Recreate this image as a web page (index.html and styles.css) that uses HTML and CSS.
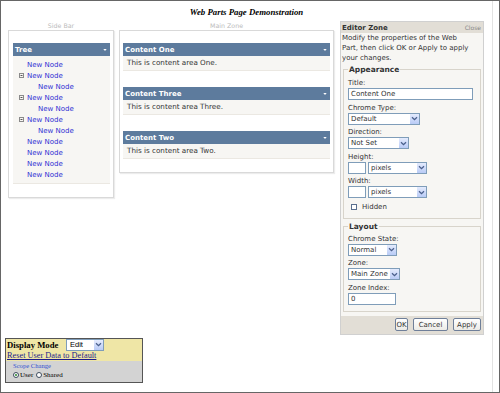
FILE: index.html
```html
<!DOCTYPE html>
<html lang="en">
  <head>
    <meta charset="UTF-8" />
    <meta name="viewport" content="width=device-width, initial-scale=1.0" />
    <title>Web Parts Page Demonstration</title>
    <link rel="stylesheet" href="styles.css">
  </head>
  <body>
    <div class="frame">
      <div class="page">
        <h1 class="title">Web Parts Page Demonstration</h1>

        <div class="zones">
          <div class="zone zone-side">
            <div class="zone-label">Side Bar</div>
            <div class="zone-box side-box">
              <div class="part-head">
                <span>Tree</span>
                <svg class="menu-arrow" width="5" height="3" viewBox="0 0 5 3"><path d="M0 0h5L2.5 3z" fill="#fff"/></svg>
              </div>
              <ul class="tree">
                <li class="node"><span class="tog"></span><a href="#">New Node</a></li>
                <li class="node"><span class="tog"><svg width="5" height="5" viewBox="0 0 5 5"><rect x=".5" y=".5" width="4" height="4" fill="none" stroke="#8a8a8a"/><path d="M1.5 2.5h2" stroke="#555"/></svg></span><a href="#">New Node</a></li>
                <li class="node sub"><span class="tog"></span><a href="#">New Node</a></li>
                <li class="node"><span class="tog"><svg width="5" height="5" viewBox="0 0 5 5"><rect x=".5" y=".5" width="4" height="4" fill="none" stroke="#8a8a8a"/><path d="M1.5 2.5h2" stroke="#555"/></svg></span><a href="#">New Node</a></li>
                <li class="node sub"><span class="tog"></span><a href="#">New Node</a></li>
                <li class="node"><span class="tog"><svg width="5" height="5" viewBox="0 0 5 5"><rect x=".5" y=".5" width="4" height="4" fill="none" stroke="#8a8a8a"/><path d="M1.5 2.5h2" stroke="#555"/></svg></span><a href="#">New Node</a></li>
                <li class="node sub"><span class="tog"></span><a href="#">New Node</a></li>
                <li class="node"><span class="tog"></span><a href="#">New Node</a></li>
                <li class="node"><span class="tog"></span><a href="#">New Node</a></li>
                <li class="node"><span class="tog"></span><a href="#">New Node</a></li>
                <li class="node"><span class="tog"></span><a href="#">New Node</a></li>
              </ul>
            </div>
          </div>

          <div class="zone zone-main">
            <div class="zone-label">Main Zone</div>
            <div class="zone-box main-box">
              <div class="part">
                <div class="part-head">
                  <span>Content One</span>
                  <svg class="menu-arrow" width="5" height="3" viewBox="0 0 5 3"><path d="M0 0h5L2.5 3z" fill="#fff"/></svg>
                </div>
                <div class="part-body">This is content area One.</div>
              </div>
              <div class="part">
                <div class="part-head">
                  <span>Content Three</span>
                  <svg class="menu-arrow" width="5" height="3" viewBox="0 0 5 3"><path d="M0 0h5L2.5 3z" fill="#fff"/></svg>
                </div>
                <div class="part-body">This is content area Three.</div>
              </div>
              <div class="part">
                <div class="part-head">
                  <span>Content Two</span>
                  <svg class="menu-arrow" width="5" height="3" viewBox="0 0 5 3"><path d="M0 0h5L2.5 3z" fill="#fff"/></svg>
                </div>
                <div class="part-body">This is content area Two.</div>
              </div>
            </div>
          </div>

          <div class="editor">
            <div class="editor-head">
              <span>Editor Zone</span>
              <span class="close">Close</span>
            </div>
            <div class="editor-body">
              <p class="intro">Modify the properties of the Web<br>Part, then click OK or Apply to apply<br>your changes.</p>

              <fieldset class="group">
                <legend>Appearance</legend>
                <div class="field">
                  <label>Title:</label>
                  <span class="input w-title">Content One</span>
                </div>
                <div class="field">
                  <label>Chrome Type:</label>
                  <span class="select w-chrome"><span class="val">Default</span><span class="arrow"><svg width="7" height="5" viewBox="0 0 7 5"><path d="M1 1.2l2.5 2.4L6 1.2" fill="none" stroke="#4a5f8c" stroke-width="1.3"/></svg></span></span>
                </div>
                <div class="field">
                  <label>Direction:</label>
                  <span class="select w-dir"><span class="val">Not Set</span><span class="arrow"><svg width="7" height="5" viewBox="0 0 7 5"><path d="M1 1.2l2.5 2.4L6 1.2" fill="none" stroke="#4a5f8c" stroke-width="1.3"/></svg></span></span>
                </div>
                <div class="field">
                  <label>Height:</label>
                  <div class="pair">
                    <span class="input w-small"></span>
                    <span class="select w-unit"><span class="val">pixels</span><span class="arrow"><svg width="7" height="5" viewBox="0 0 7 5"><path d="M1 1.2l2.5 2.4L6 1.2" fill="none" stroke="#4a5f8c" stroke-width="1.3"/></svg></span></span>
                  </div>
                </div>
                <div class="field">
                  <label>Width:</label>
                  <div class="pair">
                    <span class="input w-small"></span>
                    <span class="select w-unit"><span class="val">pixels</span><span class="arrow"><svg width="7" height="5" viewBox="0 0 7 5"><path d="M1 1.2l2.5 2.4L6 1.2" fill="none" stroke="#4a5f8c" stroke-width="1.3"/></svg></span></span>
                  </div>
                </div>
                <div class="field check-row">
                  <span class="checkbox"></span>
                  <span>Hidden</span>
                </div>
              </fieldset>

              <fieldset class="group">
                <legend>Layout</legend>
                <div class="field">
                  <label>Chrome State:</label>
                  <span class="select w-state"><span class="val">Normal</span><span class="arrow"><svg width="7" height="5" viewBox="0 0 7 5"><path d="M1 1.2l2.5 2.4L6 1.2" fill="none" stroke="#4a5f8c" stroke-width="1.3"/></svg></span></span>
                </div>
                <div class="field">
                  <label>Zone:</label>
                  <span class="select w-zone"><span class="val">Main Zone</span><span class="arrow"><svg width="7" height="5" viewBox="0 0 7 5"><path d="M1 1.2l2.5 2.4L6 1.2" fill="none" stroke="#4a5f8c" stroke-width="1.3"/></svg></span></span>
                </div>
                <div class="field">
                  <label>Zone Index:</label>
                  <span class="input w-index">0</span>
                </div>
              </fieldset>
            </div>
            <div class="editor-foot">
              <button class="btn btn-ok">OK</button>
              <button class="btn btn-cancel">Cancel</button>
              <button class="btn btn-apply">Apply</button>
            </div>
          </div>
        </div>

        <div class="display-mode">
          <div class="dm-top">
            <div class="dm-row">
              <span class="dm-label">Display Mode</span>
              <span class="select dm-select"><span class="val">Edit</span><span class="arrow"><svg width="7" height="5" viewBox="0 0 7 5"><path d="M1 1.2l2.5 2.4L6 1.2" fill="none" stroke="#4a5f8c" stroke-width="1.3"/></svg></span></span>
            </div>
            <a class="reset" href="#">Reset User Data to Default</a>
          </div>
          <div class="dm-scope">
            <div class="scope-title">Scope Change</div>
            <div class="radios">
              <span class="radio checked"></span><span>User</span>
              <span class="radio"></span><span>Shared</span>
            </div>
          </div>
        </div>
      </div>
      <div class="edge"></div>
    </div>
  </body>
</html>
```

FILE: styles.css
```css
html,
body {
  margin: 0;
  padding: 0;
  background: #fff;
}
.frame {
  width: 500px;
  height: 393px;
  box-sizing: border-box;
  border: 1px solid #666;
  display: flex;
  overflow: hidden;
}
.page {
  flex: 1;
  padding-top: 5px;
}
.edge {
  width: 7px;
  box-sizing: border-box;
  border-left: 1px solid #e2e2e2;
}
.title {
  margin: 0;
  text-align: center;
  font-family: "Liberation Serif", serif;
  font-style: italic;
  font-weight: bold;
  font-size: 8.8px;
  line-height: 12px;
  color: #000;
}

/* zones row */
.zones {
  display: flex;
  align-items: flex-start;
  margin: 3px 0 0 7px;
  font-family: "DejaVu Sans", Verdana, sans-serif;
}
.zone-label {
  text-align: center;
  font-size: 6.3px;
  line-height: 9px;
  color: #bbb;
}
.zone-side {
  width: 106px;
}
.zone-main {
  width: 215px;
  margin-left: 5px;
}
.zone-box {
  box-sizing: border-box;
  border: 1px solid #d9d9d9;
  box-shadow: 1px 1px 1px #ececec;
}
.side-box {
  padding: 12px 3px 13px 4px;
}
.main-box {
  padding: 12px 3px 13px 3px;
}
.part + .part {
  margin-top: 16px;
}
.part-head {
  display: flex;
  justify-content: space-between;
  align-items: center;
  height: 13px;
  padding: 0 3px 0 2px;
  background-color: #5d7b9d;
  color: #fff;
  font-weight: bold;
  font-size: 7px;
}
.menu-arrow {
  width: 4px;
  height: 2px;
}
.part-body {
  height: 15px;
  box-sizing: border-box;
  padding-left: 4px;
  line-height: 14px;
  font-size: 7.2px;
  color: #333;
  background-color: #f7f6f3;
  border-bottom: 1px solid #ebe8e2;
}

/* tree */
.tree {
  list-style: none;
  margin: 0;
  padding: 3px 0;
  background-color: #f7f6f3;
  border-bottom: 1px solid #ebe8e2;
}
.node {
  display: flex;
  align-items: center;
  height: 11px;
  padding-left: 6px;
  font-size: 7px;
}
.node.sub {
  padding-left: 17px;
}
.tog {
  width: 8px;
  display: flex;
  align-items: center;
}
.node a {
  color: #3030d4;
  text-decoration: none;
}

/* editor zone */
.editor {
  width: 144px;
  margin-left: 6px;
  box-sizing: border-box;
  border: 1px solid #d0d0d0;
  background-color: #f7f6f3;
  color: #333;
}
.editor-head {
  display: flex;
  justify-content: space-between;
  align-items: center;
  height: 11px;
  padding: 0 2px 0 1px;
  background-color: #e2ded6;
  font-weight: bold;
  font-size: 7px;
}
.editor-head .close {
  font-weight: normal;
  font-size: 6px;
  color: #888;
}
.editor-body {
  padding: 0 2px 0 1px;
}
.intro {
  margin: 0;
  font-size: 7px;
  line-height: 10px;
  white-space: nowrap;
}
.group {
  margin: 2px 0 0 1px;
  padding: 5px 3px 6px 4px;
  border: 1px solid #d8d4cb;
  min-width: 0;
}
.group + .group {
  margin-top: 3px;
  padding-top: 4px;
}
.group legend {
  padding: 0 1px;
  font-weight: bold;
  font-size: 7.5px;
  line-height: 9px;
}
.field {
  margin-bottom: 3.5px;
}
.field:last-child {
  margin-bottom: 0;
}
.field label {
  display: block;
  font-size: 7px;
  line-height: 9px;
}
.pair {
  display: flex;
  gap: 2px;
}
.input {
  display: block;
  box-sizing: border-box;
  height: 12px;
  padding-left: 2px;
  border: 1px solid #7f9db9;
  background: #fff;
  font-size: 7px;
  line-height: 10px;
}
.select {
  display: flex;
  box-sizing: border-box;
  height: 12px;
  border: 1px solid #7f9db9;
  background: #fff;
  font-size: 7px;
  line-height: 10px;
}
.select .val {
  flex: 1;
  padding-left: 2px;
  white-space: nowrap;
  overflow: hidden;
}
.select .arrow {
  width: 9px;
  display: flex;
  align-items: center;
  justify-content: center;
  background: linear-gradient(#e4ebfd, #b9cbf6);
  border-left: 1px solid #fff;
}
.w-title { width: 125px; }
.w-chrome { width: 72px; }
.w-dir { width: 61px; }
.w-small { width: 18px; }
.w-unit { width: 59px; }
.w-state { width: 49px; }
.w-zone { width: 52px; }
.w-index { width: 48px; }

.check-row {
  display: flex;
  align-items: center;
  gap: 5px;
  height: 10px;
  margin-top: 2px;
  padding-left: 3px;
  font-size: 7px;
}
.checkbox {
  width: 6px;
  height: 6px;
  box-sizing: border-box;
  border: 1px solid #5a6f8f;
  background: #fff;
}
.editor-foot {
  display: flex;
  justify-content: flex-end;
  align-items: center;
  gap: 5px;
  height: 18px;
  margin-top: 4px;
  padding-right: 2px;
  background-color: #e2ded6;
}
.btn {
  height: 13px;
  padding: 0;
  box-sizing: border-box;
  border: 1px solid #6f7f99;
  border-radius: 2px;
  background: linear-gradient(#fff, #ecebe6);
  font-family: "DejaVu Sans", Verdana, sans-serif;
  font-size: 7px;
  color: #333;
}
.btn-ok { width: 13px; }
.btn-cancel { width: 35px; }
.btn-apply { width: 28px; }

/* display mode panel */
.display-mode {
  width: 138px;
  margin: 3px 0 0 4px;
  box-sizing: border-box;
  border: 1px solid #555;
  font-family: "Liberation Serif", serif;
}
.dm-top {
  background-color: #efe6a6;
  padding-left: 1px;
}
.dm-row {
  display: flex;
  align-items: center;
  height: 12px;
}
.dm-label {
  width: 59px;
  font-weight: bold;
  font-size: 8.7px;
}
.dm-select {
  width: 38px;
  font-family: "Liberation Sans", Arial, sans-serif;
  font-size: 7.5px;
}
.dm-select .val {
  padding-left: 3px;
}
.reset {
  display: block;
  height: 10px;
  line-height: 10px;
  font-size: 8.3px;
  color: #1c1c8a;
}
.dm-scope {
  background-color: #d3d3d3;
  padding: 0 0 1px 7px;
}
.scope-title {
  height: 9px;
  line-height: 9px;
  font-size: 6.6px;
  color: #2f4fd0;
}
.radios {
  display: flex;
  align-items: center;
  height: 11px;
  font-size: 7px;
  gap: 1px;
}
.radio {
  width: 6px;
  height: 6px;
  box-sizing: border-box;
  border: 1px solid #3d4c5e;
  border-radius: 50%;
  background: #fff;
  position: relative;
}
.radio.checked::after {
  content: "";
  position: absolute;
  left: 1px;
  top: 1px;
  width: 2px;
  height: 2px;
  border-radius: 50%;
  background: #2d8a2d;
}
.radios span + .radio {
  margin-left: 2px;
}
```
